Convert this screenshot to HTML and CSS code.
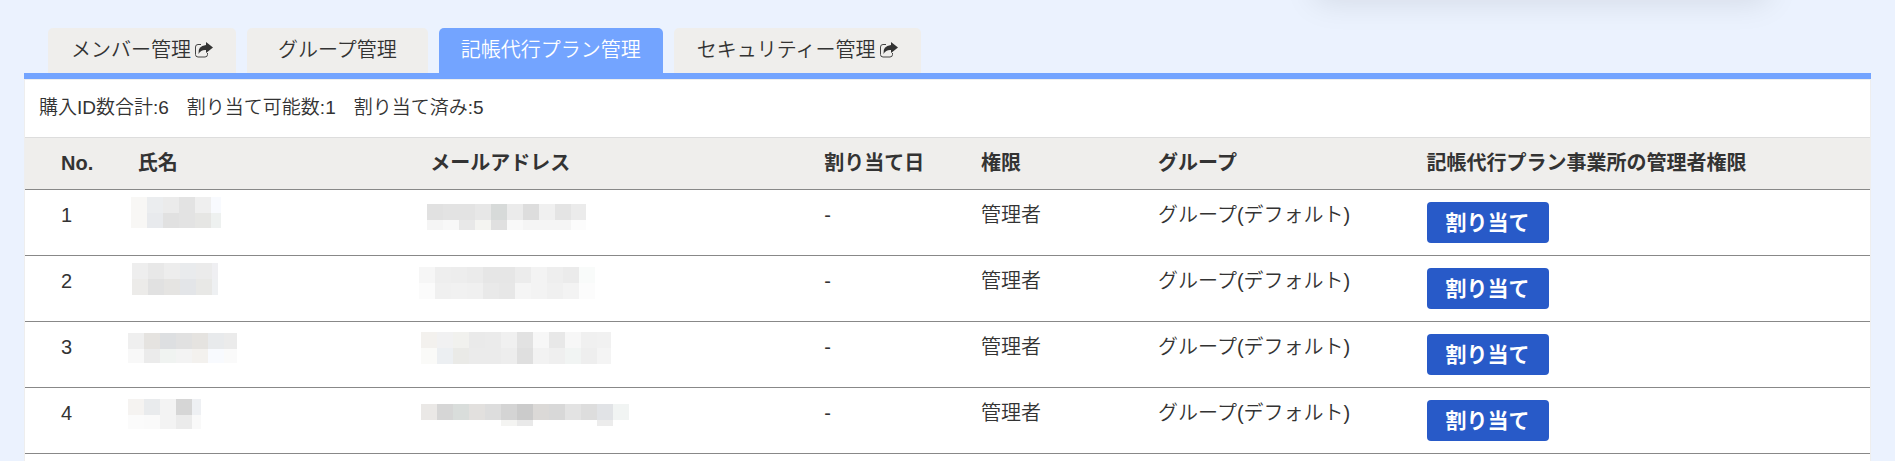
FILE: index.html
```html
<!DOCTYPE html>
<html lang="ja">
<head>
    <meta charset="utf-8">
    <title>記帳代行プラン管理</title>
    <link rel="stylesheet" href="styles.css">
</head>
<body>
    <div class="header-menu"></div>

    <nav class="tabs">
        <a class="tab" href="#member">メンバー管理
            <svg class="share" viewBox="0 0 18 16"><path d="M6 2.500H3Q.5 2.500 .5 5v7.500Q.5 15 3 15h7q2.500 0 2.500-2.500V11" fill="none" stroke="#444" stroke-width="1"/><path d="M11 0l7 5.500-7 5.500V8Q6 7.500 3.500 12 2.500 4 11 3z" fill="#333"/></svg>
        </a>
        <a class="tab" href="#group">グループ管理</a>
        <a class="tab active" href="#plan">記帳代行プラン管理</a>
        <a class="tab" href="#security">セキュリティー管理
            <svg class="share" viewBox="0 0 18 16"><path d="M6 2.500H3Q.5 2.500 .5 5v7.500Q.5 15 3 15h7q2.500 0 2.500-2.500V11" fill="none" stroke="#444" stroke-width="1"/><path d="M11 0l7 5.500-7 5.500V8Q6 7.500 3.500 12 2.500 4 11 3z" fill="#333"/></svg>
        </a>
    </nav>

    <main class="panel">
        <div class="summary">
            <span>購入ID数合計:6</span>
            <span>割り当て可能数:1</span>
            <span>割り当て済み:5</span>
        </div>
        <table class="members">
            <thead>
                <tr>
                    <th class="col-no">No.</th>
                    <th class="col-name">氏名</th>
                    <th class="col-mail">メールアドレス</th>
                    <th class="col-date">割り当て日</th>
                    <th class="col-role">権限</th>
                    <th class="col-group">グループ</th>
                    <th>記帳代行プラン事業所の管理者権限</th>
                </tr>
            </thead>
            <tbody>
                <tr>
                    <td>1</td>
                    <td class="masked"><svg class="mosaic" data-mask="name1"></svg></td>
                    <td class="masked"><svg class="mosaic" data-mask="mail1"></svg></td>
                    <td>-</td>
                    <td>管理者</td>
                    <td>グループ(デフォルト)</td>
                    <td><button type="button" class="assign">割り当て</button></td>
                </tr>
                <tr>
                    <td>2</td>
                    <td class="masked"><svg class="mosaic" data-mask="name2"></svg></td>
                    <td class="masked"><svg class="mosaic" data-mask="mail2"></svg></td>
                    <td>-</td>
                    <td>管理者</td>
                    <td>グループ(デフォルト)</td>
                    <td><button type="button" class="assign">割り当て</button></td>
                </tr>
                <tr>
                    <td>3</td>
                    <td class="masked"><svg class="mosaic" data-mask="name3"></svg></td>
                    <td class="masked"><svg class="mosaic" data-mask="mail3"></svg></td>
                    <td>-</td>
                    <td>管理者</td>
                    <td>グループ(デフォルト)</td>
                    <td><button type="button" class="assign">割り当て</button></td>
                </tr>
                <tr>
                    <td>4</td>
                    <td class="masked"><svg class="mosaic" data-mask="name4"></svg></td>
                    <td class="masked"><svg class="mosaic" data-mask="mail4"></svg></td>
                    <td>-</td>
                    <td>管理者</td>
                    <td>グループ(デフォルト)</td>
                    <td><button type="button" class="assign">割り当て</button></td>
                </tr>
            </tbody>
        </table>
    </main>
    <script src="mosaic.js"></script>
</body>
</html>
```
FILE: styles.css
```css
* { box-sizing: border-box; }
body {
    margin: 0;
    min-height: 100vh;
    padding: 28px 24px 0;
    display: flex;
    flex-direction: column;
    background: #ebf2fe;
    color: #333;
    font-family: "Liberation Sans", "Noto Sans CJK JP", sans-serif;
    font-size: 20px;
    font-weight: 350;
    line-height: 30px;
    overflow: hidden;
}

/* menu that hangs above the page, only its shadow shows */
.header-menu {
    position: absolute;
    top: -40px;
    right: 126px;
    width: 24%;
    height: 38px;
    border-radius: 8px;
    box-shadow: 0 4px 32px rgba(0, 0, 0, 0.1);
}

/* tabs */
.tabs { display: flex; gap: 11px; padding: 0 24px; border-bottom: 6px solid #73a4ff; }
.tab {
    display: flex;
    align-items: center;
    gap: 4px;
    height: 45px;
    padding: 0 23px 2px;
    border-radius: 5px 5px 0 0;
    background: #efeeec;
    color: #333;
    text-decoration: none;
}
.tab:nth-child(2) { padding: 0 31px 2px; }
.tab.active { padding: 0 22px 2px; background: #73a4ff; color: #fff; }
.share { width: 18px; height: 16px; }

/* panel */
.panel { flex: 1; background: #fff; border: 1px solid #eee; border-bottom: 0; }
.summary { display: flex; gap: 18px; padding: 13px 14px 14px; font-size: 19px; }

.members { width: 100%; table-layout: fixed; border-collapse: collapse; border-top: 1px solid #ddd; }
.members tr { border-bottom: 1px solid #888; }
.members th { padding: 10px 16px 11px; background: #efeeec; text-align: left; white-space: nowrap; }
.members td { height: 66px; padding: 10px 16px 0; vertical-align: top; white-space: nowrap; }
.members th:first-child, .members td:first-child { padding-left: 36px; padding-right: 0; }
.members td.masked { padding: 0; }
.col-no { width: 5.25%; }
.col-name { width: 15.85%; }
.col-mail { width: 21.35%; }
.col-date { width: 8.5%; }
.col-role { width: 9.6%; }
.col-group { width: 14.55%; }
.mosaic { display: block; width: 100%; height: 50px; }

.assign {
    display: block;
    height: 41px;
    margin-top: 2px;
    padding: 0 19px;
    border: 0;
    border-radius: 4px;
    background: #285ac8;
    color: #fff;
    font: bold 21px/39px "Liberation Sans", "Noto Sans CJK JP", sans-serif;
}
```
FILE: mosaic.js
```js
// Masked names and mail addresses: x, y, total width, total height, rows of block colours
const masks = {
    name1: [9, 7, 90, 31, ['f8f7f5 ebedef ebebeb e3e3e3 efefef f8fafe', 'f8f7f5 e8eaed e1e1e1 e3e3e3 e6e6e4 eef1f0']],
    name2: [10, 7, 86, 32, ['eeeeee e8e8e8 ededed e9ebed ebebeb efeff2', 'ecebe9 e1e1e1 e5e4e2 e3e5e8 e8e8e6 eef0f2']],
    name3: [6, 11, 109, 30, ['efefef e5e3e0 dddfe1 e1e1e1 e5e3e0 e8eaec ebebeb', 'f8f8f8 ebebeb f0f3f1 f3f3f3 f3f1ee f8fafe fafafa']],
    name4: [6, 11, 73, 30, ['f5f3f1 e9ebed f3f3f3 d6d6d6 eef0f3', 'fbfbfb fafafa f3f3f3 ebebeb f9f9f9']],
    mail1: [13, 14, 159, 26, ['e1e1e1 e3e3e3 e3e3e3 e7e7e7 d7dad9 ebebeb dddddd f0f0f0 e4e4e4 ebebeb', 'f5f5f5 f8f8f8 e8e8e8 f4f4f1 e0e0e0 f9f9f9 f5f5f5 f5f5f5 f5f5f5 fcfcfc']],
    mail2: [5, 11, 176, 32, ['f6f6f6 eeeeee ededed ebebeb e6e6e6 e6e6e6 ececec f3f3f3 eeeeee ebebeb f9fbfa', 'fbfbfb f0f0f0 f1f1f1 f0f0f0 e9e9e9 e7e7e7 f5f5f5 f3f3f3 f0f0f0 f3f3f3 fcfcfc']],
    mail3: [7, 10, 190, 32, ['f3f1ee f1f1f2 f1f1ee eaeaea ebebeb f0f0f0 e2e2e2 f7f7f7 e8e8e8 f7f7f7 f0f0f0 f1f1f1', 'fafaf8 eceff2 eaeae7 ebebeb ebebeb ededed dfdfdf f2f2f2 efefef f1f4f3 eeeeee f4f4f4']],
    mail4: [7, 16, 208, 22, ['eae8e6 d6d6d6 d9dddb e2e0de dddddd d4d4d4 cbcbcb dbd9d7 d8d8d8 e3e3e3 dddddd e1e3e6 f1f4f3', 'ffffff ffffff ffffff ffffff ffffff f4f4f2 e9e9e9 ffffff ffffff ffffff ffffff ececec ffffff']]
};
const BLOCK = 16;

document.querySelectorAll('.mosaic').forEach(svg => {
    const [x, y, width, height, rows] = masks[svg.dataset.mask];
    rows.forEach((row, r) => {
        row.split(' ').forEach((color, c) => {
            const rect = document.createElementNS('http://www.w3.org/2000/svg', 'rect');
            rect.setAttribute('x', x + c * BLOCK);
            rect.setAttribute('y', y + r * BLOCK);
            rect.setAttribute('width', Math.min(BLOCK, width - c * BLOCK));
            rect.setAttribute('height', Math.min(BLOCK, height - r * BLOCK));
            rect.setAttribute('fill', '#' + color);
            svg.appendChild(rect);
        });
    });
});
```
